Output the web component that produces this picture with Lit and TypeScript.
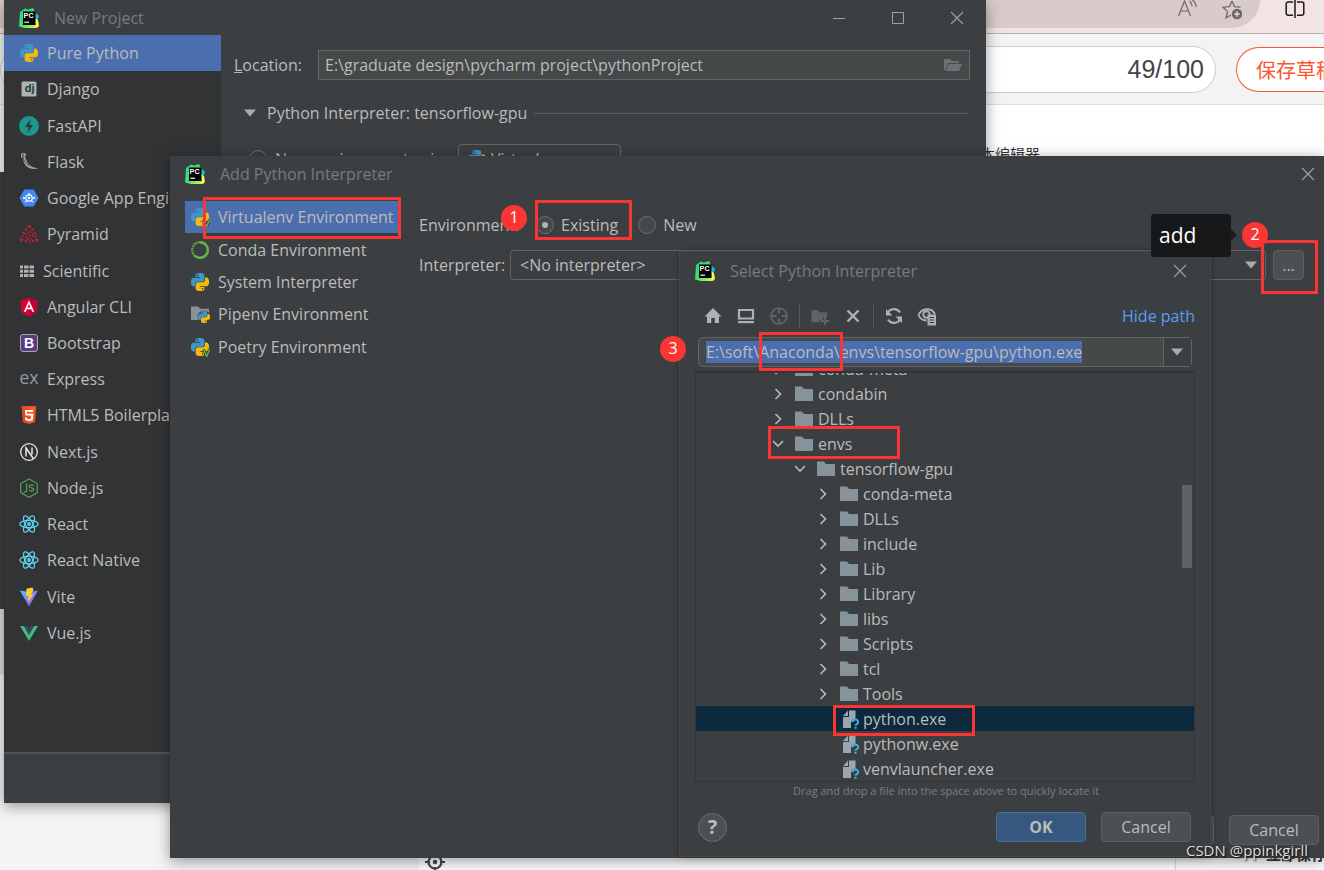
import { LitElement, html, css, svg, nothing } from "lit";
import { customElement, property, query } from "lit/decorators.js";
import { classMap } from "lit/directives/class-map.js";

const SNAKE =
  "M14.25.18l.9.2.73.26.59.3.45.32.34.34.25.34.16.33.1.3.04.26.02.2-.01.13V8.5l-.05.63-.13.55-.21.46-.26.38-.3.31-.33.25-.35.19-.35.14-.33.1-.3.07-.26.04-.21.02H8.77l-.69.05-.59.14-.5.22-.41.27-.33.32-.27.35-.2.36-.15.37-.1.35-.07.32-.04.27-.02.21v3.06H3.17l-.21-.03-.28-.07-.32-.12-.35-.18-.36-.26-.36-.36-.35-.46-.32-.59-.28-.73-.21-.88-.14-1.05-.05-1.23.06-1.22.16-1.04.24-.87.32-.71.36-.57.4-.44.42-.33.42-.24.4-.16.36-.1.32-.05.24-.01h.16l.06.01h8.16v-.83H6.18l-.01-2.75-.02-.37.05-.34.11-.31.17-.28.25-.26.31-.23.38-.2.44-.18.51-.15.58-.12.64-.1.71-.06.77-.04.84-.02 1.27.05zm-6.3 1.98l-.23.33-.08.41.08.41.23.34.33.22.41.09.41-.09.33-.22.23-.34.08-.41-.08-.41-.23-.33-.33-.22-.41-.09-.41.09z";

const snakes = svg`
  <path d=${SNAKE} fill="#3f97c9"/>
  <path d=${SNAKE} fill="#f2bc0c" transform="rotate(180 12 12)"/>`;

const reactArt = svg`
  <g fill="none" stroke="#5ccfee" stroke-width="1.3">
    <ellipse cx="10" cy="10" rx="9.2" ry="3.6"/>
    <ellipse cx="10" cy="10" rx="9.2" ry="3.6" transform="rotate(60 10 10)"/>
    <ellipse cx="10" cy="10" rx="9.2" ry="3.6" transform="rotate(120 10 10)"/>
  </g>
  <circle cx="10" cy="10" r="1.9" fill="#5ccfee"/>`;

const folderShape = "M1 2.500h7l2 2.500h9V17H1z";

/* All glyphs are drawn on a 20 x 20 grid. */
const ART: Record<string, unknown> = {
  pycharm: svg`
    <defs>
      <linearGradient id="pc" x1="0" y1="0" x2="1" y2="1">
        <stop offset="0" stop-color="#21d789"/><stop offset=".5" stop-color="#3fe06a"/><stop offset="1" stop-color="#fcf84a"/>
      </linearGradient>
    </defs>
    <path d="M1 4l5-3.500 3 1 5-1.500 1.500 3.500 1 2L18 15l1.500 4-3 1H6l-6-1.500z" fill="url(#pc)"/>
    <path d="M17 5l3 3-1.500 4-2.500-3z" fill="#07c3f2"/>
    <path d="M16 10l3 2 1 6-3 2z" fill="#fcf84a"/>
    <rect x="4" y="3.500" width="12.500" height="13.500" fill="#000"/>
    <text x="4.600" y="10.300" font-size="7.200" font-weight="700" font-family="Liberation Sans, sans-serif" fill="#fff">PC</text>
    <rect x="5.400" y="13.600" width="4.600" height="1.200" fill="#fff"/>`,
  python: svg`<g transform="translate(1 1) scale(.75)">${snakes}</g>`,
  virtualenv: svg`<g transform="translate(1 1) scale(.75)">${snakes}</g>
    <path d="M13.500 12.500l3.200 7 2.800-7" fill="none" stroke="#3c3f41" stroke-width="3"/>
    <path d="M13.500 12.500l3.200 7 2.800-7" fill="none" stroke="#62b543" stroke-width="1.400"/>`,
  django: svg`<rect x="2.500" y="2.500" width="15" height="15" rx="1.500" fill="#afb1b3"/>
    <text x="5.800" y="12.600" font-size="11" font-weight="700" font-family="Liberation Sans, sans-serif" fill="#143c2c">dj</text>`,
  fastapi: svg`<circle cx="10" cy="10" r="10" fill="#1c978a"/>
    <path d="M11.500 3L6 11h3.600L8.500 17 14 9h-3.600z" fill="#2b3a3a"/>`,
  flask: svg`<path d="M2 1.500l4-.5 1.500 2-1.500.7c.6 4.800 3.600 9.200 7 11.100 2 1 4.500 1.200 6 1.700-5 1-9.500.2-12.500-3.300C4.300 10.600 4 7.600 3.200 5L2 5.500z" fill="#a0a2a4"/>
    <path d="M3.500 2.500l1.800 7.500M5 2.500l-2 1.500M5.800 9.500l4.400 4.500" stroke="#313335" stroke-width=".8"/>`,
  gae: svg`<path d="M5.300 1.500h9.400L19.500 10l-4.800 8.500H5.300L.5 10z" fill="#4387f4"/>
    <circle cx="10" cy="10" r="3.200" fill="none" stroke="#fff" stroke-width="1.200"/>
    <circle cx="10" cy="10" r="1.300" fill="#fff"/>
    <path d="M4 10h2M14 10h2M10 5v2M6 14l1.500-1M14 14l-1.500-1" stroke="#fff" stroke-width="1.400"/>`,
  pyramid: svg`<g fill="#c2212e">
    <circle cx="10.300" cy="2.400" r="1.600"/><circle cx="2.300" cy="15.800" r="1.600"/><circle cx="17.800" cy="15.800" r="1.600"/>
    <circle cx="7" cy="5.400" r="1.200"/><circle cx="13.600" cy="5.400" r="1.200"/><circle cx="4.700" cy="9" r="1.200"/>
    <circle cx="15.900" cy="9" r="1.200"/><circle cx="3.500" cy="12.300" r="1"/><circle cx="16.900" cy="12.300" r="1"/>
    <circle cx="7" cy="17" r="1.200"/><circle cx="10.300" cy="17.500" r="1"/><circle cx="13.800" cy="17" r="1.200"/></g>
    <circle cx="10.300" cy="11.500" r="3.800" fill="none" stroke="#c2212e" stroke-width="1.500" stroke-dasharray="1.800 1.200"/>
    <circle cx="10.300" cy="11.500" r="1.200" fill="#c2212e"/>`,
  scientific: svg`<g fill="#afb1b3">
    <path d="M1 4.500h3v3H1zM5 4.500h4.500v3H5zM10.500 4.500H15v3h-4.500zM1 8.700h3v3H1zM5 8.700h4.500v3H5zM10.500 8.700H15v3h-4.500zM1 12.900h3v3H1zM5 12.900h4.500v3H5zM10.500 12.900H15v3h-4.500z"/></g>`,
  angular: svg`<path d="M10 .8l8.700 3.100-1.300 11.500L10 19.500l-7.400-4.100L1.300 3.900z" fill="#dd0031"/>
    <path d="M10 .8l8.700 3.100-1.300 11.500L10 19.500z" fill="#c3002f"/>
    <path d="M10 3.200L4.800 14.800h2l1-2.600h4.400l1 2.600h2zm0 3.900l1.500 3.500h-3z" fill="#fff"/>`,
  bootstrap: svg`<rect x="1.500" y="1.500" width="17" height="17" rx="2.500" fill="#563d7c" stroke="#a9a3b5"/>
    <text x="10" y="15" font-size="14" text-anchor="middle" font-weight="700" font-family="Liberation Sans, sans-serif" fill="#fff">B</text>`,
  express: svg`<text x="10" y="15" font-size="18" text-anchor="middle" font-family="Open Sans, sans-serif" fill="#8c99a3">ex</text>`,
  html5: svg`<path d="M2.600 1h14.800L16 17.200l-6 1.800-6-1.800z" fill="#e44d26"/><path d="M10 2.300h6l-1.200 13.900-4.800 1.500z" fill="#f16529"/>
    <path d="M14 5H6l.5 5.500h5.800l-.3 3.200-2 .6-2-.6-.1-1.200H6.100l.2 2.600 3.700 1.100 3.700-1.100.6-6.300H8.100l-.2-2h6z" fill="#fff"/>`,
  next: svg`<circle cx="10" cy="10" r="8.300" fill="none" stroke="#e8e8e8" stroke-width="1.300"/>
    <path d="M7 14.500V6l7.300 10.500M13 5.500v7" fill="none" stroke="#e8e8e8" stroke-width="1.500"/>`,
  node: svg`<path d="M10 .9l8.300 4.700v9L10 19.200l-8.300-4.600v-9z" fill="none" stroke="#539e54" stroke-width="1.200"/>
    <path d="M7.600 5.800v7c0 1.600-2.200 1.500-3 .7M14.700 7.500c-1-1-4.600-1-4.600.8 0 2.200 4.800 1 4.800 3.200 0 1.900-3.900 1.900-5 .4" fill="none" stroke="#539e54" stroke-width="1.300"/>`,
  react: reactArt,
  vite: svg`<defs>
      <linearGradient id="vt" x1="0" y1="0" x2="1" y2="1"><stop offset="0" stop-color="#41d1ff"/><stop offset="1" stop-color="#bd34fe"/></linearGradient>
    </defs>
    <path d="M1 3.500L10 5l9-1.500L10 19.500z" fill="url(#vt)"/>
    <path d="M13.500.5l-6 1.200-.6 7.300 2.500-.4-.8 4.400 1.600-.5-.8 3.500 5-9-2.500.4L14.500 3z" fill="#ffcf2a"/>`,
  vue: svg`<path d="M1 3h4l5 8.500L15 3h4l-9 15z" fill="#42b883"/><path d="M5 3h3.300L10 6l1.700-3H15l-5 8.500z" fill="#35495e"/>`,
  conda: svg`<circle cx="10" cy="10" r="7.800" fill="none" stroke="#62b543" stroke-width="2.200" stroke-dasharray="1.600 .9"/>
    <path d="M10 2.200a7.800 7.800 0 1 1-5.500 13.300" fill="none" stroke="#62b543" stroke-width="2.400"/>`,
  pipenv: svg`<path d="M1 2.500h7l2 2.200h9V16H1z" fill="#87939a"/><g transform="translate(8 7) scale(.5)">
    <circle cx="12" cy="12" r="13" fill="#3c3f41"/>${snakes}</g>`,
  folder: svg`<path d=${folderShape} fill="#87939a"/>`,
  open: svg`<path d="M1 4h6l2 2h7v2H5l-3 7.500H1z" fill="#6e7173"/><path d="M5.500 9H19l-3 7H2.500z" fill="#6e7173"/>`,
  file: svg`<path d="M9 1.500h6.500v8l-3 1-1.500 3v5.500H3V8h6z" fill="#9aa7b0"/><path d="M8 1.500V7H3z" fill="#9aa7b0"/>
    <path d="M12.500 13.200c.3-3.700 5.900-3.300 5.700.2-.2 1.900-2.700 1.700-2.700 3.400" fill="none" stroke="#3fb1da" stroke-width="2"/>
    <rect x="14.500" y="17.800" width="2.100" height="2" fill="#3fb1da"/>`,
  right: svg`<path d="M7.500 5l5 5-5 5" fill="none" stroke="#b4b6b8" stroke-width="1.700"/>`,
  down: svg`<path d="M5 7l5 5 5-5" fill="none" stroke="#b4b6b8" stroke-width="1.700"/>`,
  home: svg`<path d="M10 2l8.500 8.500H16V17h-4.300v-5H8.300v5H4v-6.500H1.500z" fill="#afb1b3"/>`,
  desktop: svg`<path d="M3 4h14v8.500H3z" fill="none" stroke="#afb1b3" stroke-width="2.200"/><path d="M2 15h16v2.200H2z" fill="#afb1b3"/>`,
  target: svg`<circle cx="10" cy="10" r="7.800" fill="none" stroke="#606365" stroke-width="1.800"/>
    <path d="M10 2v5.500M10 12.500V18M2 10h5.500M12.500 10H18" stroke="#606365" stroke-width="2.200"/>`,
  newfolder: svg`<path d="M1.500 4h6l2 2.200H17v5h-4v3H9.500v2h-8z" fill="#606365"/><path d="M15 11v8M11 15h8" stroke="#606365" stroke-width="2"/>`,
  remove: svg`<path d="M4.500 4.500l11 11M15.500 4.500l-11 11" stroke="#afb1b3" stroke-width="2.400"/>`,
  refresh: svg`<path d="M3.500 9C4 2.500 12.500 1 16 6.500M16.500 11C16 17.500 7.500 19 4 13.500" fill="none" stroke="#afb1b3" stroke-width="2.200"/>
    <path d="M2 3v6.500h6.500zM18 17v-6.500h-6.500z" fill="#afb1b3"/>`,
  eye: svg`<path d="M1.500 9c3.500-7.500 13-7.500 16.500-1M1.500 9c1.500 3.500 4.500 5.500 8 5.500" fill="none" stroke="#afb1b3" stroke-width="1.900"/>
    <circle cx="9.500" cy="8.500" r="3.300" fill="none" stroke="#afb1b3" stroke-width="1.900"/>
    <path d="M10.500 8.500H19V19.500h-8.500z" fill="#afb1b3"/><path d="M12.500 11.500h4.500M12.500 14h4.500M12.500 16.500h4.500" stroke="#3c3f41"/>`,
  triangle: svg`<path d="M4 6.500h12L10 13.500z" fill="#a9abad"/>`,
  close: svg`<path d="M4 4l12 12M16 4L4 16" stroke="#a0a2a4" stroke-width="1.100"/>`,
  minimize: svg`<path d="M4 10.500h12" stroke="#a0a2a4"/>`,
  maximize: svg`<path d="M4.500 4.500h11v11h-11z" fill="none" stroke="#a0a2a4"/>`,
  aloud: svg`<g fill="none" stroke="#6f6769" stroke-width="1.200"><path d="M1.500 16L7.500 1l6 15M3.500 11h8M12.500 1c1.800 1.400 2.500 3 2.600 5.500M15.500 0c2.500 2 3.500 4 3.500 7"/></g>`,
  star: svg`<path d="M10 1l2.500 5.600 6 .6M10 1L7.500 6.600l-6.500.6 4.500 4.400L4 18l5-3" fill="none" stroke="#6f6769" stroke-width="1.300"/>
    <circle cx="15" cy="14" r="5.200" fill="#6f6769"/><path d="M15 11.300v5.400M12.300 14h5.400" stroke="#e6dada" stroke-width="1.300"/>`,
  split: svg`<path d="M8 2H3.500C2 2 1.200 2.800 1.200 4v9c0 1.500.8 2.300 2.300 2.300H8M12 2h4.500c1.500 0 2.300.8 2.300 2v9c0 1.500-.8 2.300-2.300 2.300H12M10 0v18" fill="none" stroke="#1c1718" stroke-width="1.500"/>`,
  locate: svg`<circle cx="10" cy="10" r="6.500" fill="none" stroke="#44465a" stroke-width="2.200"/><circle cx="10" cy="10" r="2.200" fill="#44465a"/>
    <path d="M10 0v5M10 15v5M0 10h5M15 10h5" stroke="#44465a" stroke-width="2.200"/>`,
};

const icon = (name: string, cls = "icon") =>
  html`<svg class=${cls} viewBox="0 0 20 20" aria-hidden="true">${ART[name]}</svg>`;

const shared = css`
  :host {
    font-family: "Open Sans", "Noto Sans", sans-serif;
    font-size: 16px;
    line-height: 22px;
    color: #bbbbbb;
  }
  *,
  *::before,
  *::after {
    box-sizing: border-box;
  }
  button,
  input,
  select {
    font: inherit;
    color: inherit;
    margin: 0;
    padding: 0;
    border: 0;
    background: none;
    outline: none;
  }
  .icon {
    width: 20px;
    height: 20px;
    flex: none;
    display: block;
  }
  .btn {
    width: 90px;
    height: 30px;
    border: 1px solid #5e6060;
    border-radius: 4px;
    background: #4c5052;
    flex: none;
  }
  .btn.primary {
    background: #365880;
    border-color: #4c708c;
    font-weight: 700;
  }
`;

@customElement("dialog-title")
class DialogTitle extends LitElement {
  @property() label = "";
  @property({ type: Boolean }) controls = false;
  static styles = [
    shared,
    css`
      :host {
        display: flex;
        align-items: center;
        height: 36px;
        padding: 0 6px 0 15px;
        color: #787a7c;
      }
      .name {
        flex: 1;
        padding-left: 15px;
      }
      .actions {
        display: flex;
        gap: 39px;
      }
    `,
  ];
  render() {
    return html`${icon("pycharm")}<span class="name">${this.label}</span>
      <span class="actions">
        ${this.controls
          ? html`<button aria-label="Minimize">${icon("minimize")}</button><button aria-label="Maximize">${icon("maximize")}</button>`
          : nothing}
        <button aria-label="Close">${icon("close")}</button>
      </span>`;
  }
}

const PROJECT_TYPES = [
  ["python", "Pure Python"],
  ["django", "Django"],
  ["fastapi", "FastAPI"],
  ["flask", "Flask"],
  ["gae", "Google App Engine"],
  ["pyramid", "Pyramid"],
  ["scientific", "Scientific"],
  ["angular", "Angular CLI"],
  ["bootstrap", "Bootstrap"],
  ["express", "Express"],
  ["html5", "HTML5 Boilerplate"],
  ["next", "Next.js"],
  ["node", "Node.js"],
  ["react", "React"],
  ["react", "React Native"],
  ["vite", "Vite"],
  ["vue", "Vue.js"],
];

@customElement("new-project-dialog")
class NewProjectDialog extends LitElement {
  static styles = [
    shared,
    css`
      :host {
        display: flex;
        flex-direction: column;
        background: #3c3f41;
      }
      dialog-title {
        height: 35px;
        padding-right: 19px;
      }
      .body {
        flex: 1;
        display: flex;
        min-height: 0;
      }
      .types {
        width: 217px;
        background: #313335;
        flex: none;
      }
      .list {
        height: 616px;
        display: grid;
        grid-auto-rows: 1fr;
      }
      .type {
        display: flex;
        align-items: center;
        gap: 8px;
        padding: 0 15px;
        text-align: left;
        white-space: nowrap;
      }
      .type.tight {
        gap: 4px;
      }
      .type.selected {
        background: #4b6eaf;
      }
      .form {
        flex: 1;
        padding: 15px 16px 0 13px;
      }
      .row {
        display: flex;
        align-items: center;
      }
      .location label {
        width: 84px;
      }
      .location .box {
        flex: 1;
        display: flex;
        align-items: center;
        height: 30px;
        padding: 0 6px;
        border: 1px solid #646464;
        background: #45494a;
      }
      .location input {
        flex: 1;
      }
      .section {
        margin: 22px 2px 0 6px;
        gap: 7px;
      }
      .rule {
        flex: 1;
        height: 1px;
        background: #5a5d5f;
      }
      .env {
        margin: 20px 0 0 15px;
      }
      .env input {
        appearance: none;
        width: 18px;
        height: 18px;
        border: 1px solid #6b6e70;
        border-radius: 50%;
      }
      .env label {
        width: 191px;
        padding-left: 8px;
        white-space: nowrap;
      }
      .tool {
        display: flex;
        align-items: center;
        width: 163px;
        height: 30px;
        gap: 4px;
        padding: 0 8px;
        border: 1px solid #646464;
        border-radius: 4px;
      }
      .tool select {
        appearance: none;
        flex: 1;
      }
      .foot {
        height: 51px;
        border-top: 2px solid #515355;
      }
    `,
  ];
  render() {
    return html`
      <dialog-title label="New Project" controls></dialog-title>
      <div class="body">
        <nav class="types">
          <div class="list">
            ${PROJECT_TYPES.map(
              ([art, name], i) => html`<button class=${classMap({ type: true, selected: i === 0, tight: name === "Scientific" })}>
                ${icon(art)}<span>${name}</span>
              </button>`
            )}
          </div>
        </nav>
        <div class="form">
          <div class="row location">
            <label for="loc"><u>L</u>ocation:</label>
            <div class="box">
              <input id="loc" value="E:\\graduate design\\pycharm project\\pythonProject" />
              ${icon("open")}
            </div>
          </div>
          <div class="row section">${icon("triangle")}<span>Python Interpreter: tensorflow-gpu</span><span class="rule"></span></div>
          <div class="row env">
            <input type="radio" id="fresh" /><label for="fresh">New environment using</label>
            <div class="tool">
              ${icon("python")}<select aria-label="Environment tool"><option>Virtualenv</option></select>
            </div>
          </div>
        </div>
      </div>
      <div class="foot"></div>
    `;
  }
}

const ENVIRONMENTS = [
  ["virtualenv", "Virtualenv Environment"],
  ["conda", "Conda Environment"],
  ["python", "System Interpreter"],
  ["pipenv", "Pipenv Environment"],
  ["virtualenv", "Poetry Environment"],
];

@customElement("add-interpreter-dialog")
class AddInterpreterDialog extends LitElement {
  static styles = [
    shared,
    css`
      :host {
        display: flex;
        flex-direction: column;
        background: #3c3f41;
      }
      .body {
        flex: 1;
        display: flex;
        padding: 9px 20px 0 15px;
        gap: 20px;
      }
      .kinds {
        width: 214px;
        height: 162px;
        display: grid;
        grid-auto-rows: 1fr;
        flex: none;
      }
      .kind {
        display: flex;
        align-items: center;
        gap: 8px;
        padding: 0 5px;
      }
      .kind.selected {
        background: #4b6eaf;
      }
      .form {
        flex: 1;
        padding-top: 9px;
      }
      .row {
        display: flex;
        align-items: center;
        height: 30px;
        margin-bottom: 10px;
      }
      .caption {
        width: 91px;
      }
      .choice {
        display: flex;
        align-items: center;
        gap: 7px;
        margin-right: 20px;
      }
      .radios {
        padding-left: 26px;
        display: flex;
      }
      input[type="radio"] {
        appearance: none;
        display: grid;
        place-items: center;
        width: 18px;
        height: 18px;
        border: 1px solid #6b6e70;
        border-radius: 50%;
        background: #43494a;
      }
      input:checked::before {
        content: "";
        width: 6px;
        height: 6px;
        border-radius: 50%;
        background: #b4b4b4;
      }
      .combo {
        flex: 1;
        display: flex;
        align-items: center;
        height: 30px;
        padding: 0 4px 0 9px;
        border: 1px solid #646464;
        border-radius: 4px;
      }
      .combo select {
        appearance: none;
        flex: 1;
      }
      .more {
        width: 31px;
        margin-left: 7px;
      }
      .foot {
        display: flex;
        justify-content: flex-end;
        gap: 15px;
        padding: 0 5px 13px;
      }
    `,
  ];
  render() {
    return html`
      <dialog-title label="Add Python Interpreter"></dialog-title>
      <div class="body">
        <nav class="kinds">
          ${ENVIRONMENTS.map(
            ([art, name], i) => html`<button class=${classMap({ kind: true, selected: i === 0 })}>${icon(art)}<span>${name}</span></button>`
          )}
        </nav>
        <div class="form">
          <div class="row">
            <span class="caption">Environment:</span>
            <div class="radios">
              <label class="choice"><input type="radio" name="env" checked />Existing</label>
              <label class="choice"><input type="radio" name="env" />New</label>
            </div>
          </div>
          <div class="row">
            <label class="caption" for="interp">Interpreter:</label>
            <div class="combo">
              <select id="interp"><option>&lt;No interpreter&gt;</option></select>
              ${icon("triangle")}
            </div>
            <button class="btn more">...</button>
          </div>
        </div>
      </div>
      <div class="foot"><button class="btn">OK</button><button class="btn">Cancel</button></div>
    `;
  }
}

interface Node {
  name: string;
  depth: number;
  kind: "closed" | "open" | "file";
}
const TREE: Node[] = [
  { name: "conda-meta", depth: 0, kind: "closed" },
  { name: "condabin", depth: 0, kind: "closed" },
  { name: "DLLs", depth: 0, kind: "closed" },
  { name: "envs", depth: 0, kind: "open" },
  { name: "tensorflow-gpu", depth: 1, kind: "open" },
  ...["conda-meta", "DLLs", "include", "Lib", "Library", "libs", "Scripts", "tcl", "Tools"].map(
    (name) => ({ name, depth: 2, kind: "closed" }) as Node
  ),
  ...["python.exe", "pythonw.exe", "venvlauncher.exe"].map((name) => ({ name, depth: 2, kind: "file" }) as Node),
];

@customElement("select-interpreter-dialog")
class SelectInterpreterDialog extends LitElement {
  @query(".path input") path!: HTMLInputElement;
  static styles = [
    shared,
    css`
      :host {
        display: flex;
        flex-direction: column;
        background: #3c3f41;
      }
      dialog-title {
        height: 38px;
        padding-right: 20px;
      }
      .tools {
        display: flex;
        align-items: center;
        height: 52px;
        padding: 0 15px 0 23px;
        gap: 13px;
      }
      .sep {
        width: 1px;
        height: 25px;
        margin: 0 -3px;
        background: #55585a;
      }
      .hide {
        margin-left: auto;
        color: #589df6;
        text-decoration: none;
      }
      .path {
        display: flex;
        height: 30px;
        margin: -5px 18px 0;
        border: 1px solid #646464;
        border-radius: 4px;
        background: #45494a;
      }
      .path input {
        flex: 1;
        padding-left: 7px;
        min-width: 0;
      }
      .path input::selection {
        background: #4b6eaf;
        color: #bbbbbb;
      }
      .path button {
        width: 28px;
        padding: 0 3px;
        border-left: 1px solid #646464;
        background: #3c3f41;
      }
      .tree {
        flex: 1;
        min-height: 0;
        display: flex;
        align-items: stretch;
        margin: 4px 15px 0;
        border: 1px solid #323436;
        border-top-width: 2px;
        overflow: hidden;
        background: linear-gradient(#5f6162, #5f6162) no-repeat right 2px top 112px / 10px 83px;
      }
      ul {
        flex: 1;
        display: flex;
        flex-direction: column;
        justify-content: flex-end;
        list-style: none;
        margin: 0;
        padding: 0;
      }
      li {
        display: flex;
        align-items: center;
        height: 25px;
        flex: none;
        padding-left: 72px;
      }
      li.d1 {
        padding-left: 94px;
      }
      li.d2 {
        padding-left: 117px;
      }
      li .icon:first-child {
        margin-right: 6px;
      }
      li span {
        padding-left: 4px;
      }
      li.file {
        padding-left: 144px;
      }
      li.file .icon:first-child {
        margin-right: -1px;
      }
      li.selected {
        background: #0d293e;
      }
      .hint {
        text-align: center;
        font-size: 11px;
        line-height: 17px;
        color: #7c7e80;
        padding-left: 2px;
      }
      .foot {
        display: flex;
        align-items: center;
        gap: 15px;
        padding: 13px 19px 14px 18px;
      }
      .help {
        width: 29px;
        height: 29px;
        border: 1px solid #6b6e70;
        border-radius: 50%;
        background: #4c5052;
        font-size: 20px;
        font-weight: 700;
        margin-right: auto;
      }
    `,
  ];
  firstUpdated() {
    this.path.focus({ preventScroll: true });
    this.path.select();
  }
  render() {
    return html`
      <dialog-title label="Select Python Interpreter"></dialog-title>
      <div class="tools">
        <button aria-label="Home">${icon("home")}</button>
        <button aria-label="Desktop">${icon("desktop")}</button>
        <button aria-label="Project">${icon("target")}</button>
        <span class="sep"></span>
        <button aria-label="New folder">${icon("newfolder")}</button>
        <button aria-label="Delete">${icon("remove")}</button>
        <span class="sep"></span>
        <button aria-label="Refresh">${icon("refresh")}</button>
        <button aria-label="Show hidden files">${icon("eye")}</button>
        <a class="hide" href="#">Hide path</a>
      </div>
      <div class="path">
        <input aria-label="Path" value="E:\\soft\\Anaconda\\envs\\tensorflow-gpu\\python.exe" />
        <button aria-label="Recent paths">${icon("triangle")}</button>
      </div>
      <div class="tree">
        <ul role="tree">
          ${TREE.map(
            (n) => html`<li role="treeitem" class=${classMap({ ["d" + n.depth]: true, file: n.kind === "file", selected: n.name === "python.exe" })}>
              ${n.kind === "file" ? icon("file") : html`${icon(n.kind === "open" ? "down" : "right")}${icon("folder")}`}<span>${n.name}</span>
            </li>`
          )}
        </ul>
      </div>
      <div class="hint">Drag and drop a file into the space above to quickly locate it</div>
      <div class="foot">
        <button class="help" aria-label="Help">?</button>
        <button class="btn primary">OK</button>
        <button class="btn">Cancel</button>
      </div>
    `;
  }
}

@customElement("app-root")
class AppRoot extends LitElement {
  static styles = [
    shared,
    css`
      :host {
        display: block;
        position: relative;
        height: 100vh;
        overflow: hidden;
        background: #fff;
      }
      .page {
        height: 100%;
        display: flex;
        flex-direction: column;
      }
      .browser {
        display: flex;
        height: 34px;
        background: #f2e4e3;
        border-bottom: 1px solid #bcaead;
      }
      .address {
        flex: 1;
        height: 28px;
        margin-right: 25px;
        padding-right: 18px;
        display: flex;
        justify-content: flex-end;
        gap: 25px;
        background: #d9cbca;
        border-radius: 0 0 28px 0;
      }
      .browser > .icon {
        margin-right: 19px;
      }
      .topbar {
        display: flex;
        align-items: center;
        height: 71px;
        gap: 20px;
        background: #f3f3f3;
        border-bottom: 1px solid #dddddd;
      }
      .title {
        flex: 1;
        height: 47px;
        border: 1px solid #cccccc;
        border-radius: 24px;
        background: #fff;
        color: #444444;
        text-align: right;
        padding-right: 11px;
        font: 25px/45px "Liberation Sans", sans-serif;
      }
      .draft {
        width: 88px;
        height: 45px;
        border: 1px solid #fc5531;
        border-right: 0;
        border-radius: 23px 0 0 23px;
        background: #fff;
        color: #fc5531;
        font: 20px "Liberation Sans", "Noto Sans CJK SC", sans-serif;
        padding-left: 19px;
        text-align: left;
        white-space: nowrap;
        overflow: hidden;
      }
      .article {
        flex: 1;
        display: flex;
        align-items: flex-start;
        font: 15px/20px "Noto Sans CJK SC", sans-serif;
        color: #333333;
      }
      .gutter {
        width: 419px;
        height: 100%;
        background: #f4f4f4;
      }
      .ide {
        height: 503px;
        margin-top: 67px;
        background: #3c3f41;
        border-bottom: 66px solid #dcdcdc;
      }
      .editor {
        flex: 1;
        height: 100%;
        display: flex;
        flex-direction: column;
        justify-content: space-between;
      }
      .editor p {
        margin: 39px 0 0 561px;
      }
      .status {
        display: flex;
        height: 18px;
        padding-left: 6px;
        justify-content: space-between;
      }
      .save {
        width: 149px;
        padding-left: 90px;
        border-left: 1px solid #dddddd;
        white-space: nowrap;
        overflow: hidden;
        font-weight: 700;
        line-height: 4px;
      }
      .window {
        position: absolute;
        box-shadow: 0 3px 14px rgba(0, 0, 0, 0.4);
      }
      .w1 {
        left: 4px;
        top: 0;
        width: 982px;
        height: 803px;
      }
      .w2 {
        left: 170px;
        right: 0;
        top: 156px;
        height: 702px;
      }
      .w3 {
        left: 680px;
        top: 252px;
        width: 530px;
        height: 604px;
        box-shadow: 0 0 8px rgba(0, 0, 0, 0.35), 0 0 0 1px #505355;
      }
      .mark {
        position: absolute;
        border: 3px solid #fa3534;
      }
      .m1 { left: 203px; top: 197px; width: 198px; height: 42px; }
      .m2 { left: 535px; top: 200px; width: 97px; height: 40px; }
      .m3 { left: 1261px; top: 240px; width: 57px; height: 54px; }
      .m4 { left: 759px; top: 332px; width: 84px; height: 39px; }
      .m5 { left: 768px; top: 426px; width: 132px; height: 33px; }
      .m6 { left: 833px; top: 705px; width: 142px; height: 31px; }
      .step {
        position: absolute;
        width: 26px;
        height: 26px;
        border-radius: 50%;
        background: #fa3534;
        color: #fff;
        text-align: center;
        line-height: 24px;
      }
      .s1 { left: 501px; top: 205px; }
      .s2 { left: 1242px; top: 222px; }
      .s3 { left: 660px; top: 336px; }
      .tip {
        position: absolute;
        left: 1151px;
        top: 214px;
        width: 80px;
        height: 43px;
        padding-left: 8px;
        border-radius: 3px;
        background: rgba(20, 21, 22, 0.92);
        color: #fff;
        font-size: 21px;
        line-height: 43px;
      }
      .tip::after {
        content: "";
        position: absolute;
        left: 100%;
        top: 15px;
        border: 6px solid transparent;
        border-left-color: #1c1d1e;
        border-right: 0;
      }
      .credit {
        position: absolute;
        right: 16px;
        bottom: 9px;
        color: #dcdcdc;
        font-size: 15px;
        text-shadow: 1px 1px 2px #000;
      }
    `,
  ];
  render() {
    return html`
      <div class="page">
        <div class="browser">
          <div class="address">${icon("aloud")}${icon("star")}</div>
          ${icon("split")}
        </div>
        <div class="topbar">
          <div class="title">49/100</div>
          <button class="draft">保存草稿</button>
        </div>
        <div class="article">
          <div class="gutter"><div class="ide"></div></div>
          <div class="editor">
            <p>本编辑器</p>
            <div class="status">${icon("locate")}<div class="save">立即保存</div></div>
          </div>
        </div>
      </div>
      <new-project-dialog class="window w1"></new-project-dialog>
      <add-interpreter-dialog class="window w2"></add-interpreter-dialog>
      <select-interpreter-dialog class="window w3"></select-interpreter-dialog>
      ${[1, 2, 3, 4, 5, 6].map((n) => html`<div class="mark m${n}"></div>`)}
      ${[1, 2, 3].map((n) => html`<div class="step s${n}">${n}</div>`)}
      <div class="tip">add</div>
      <div class="credit">CSDN @ppinkgirll</div>
    `;
  }
}
